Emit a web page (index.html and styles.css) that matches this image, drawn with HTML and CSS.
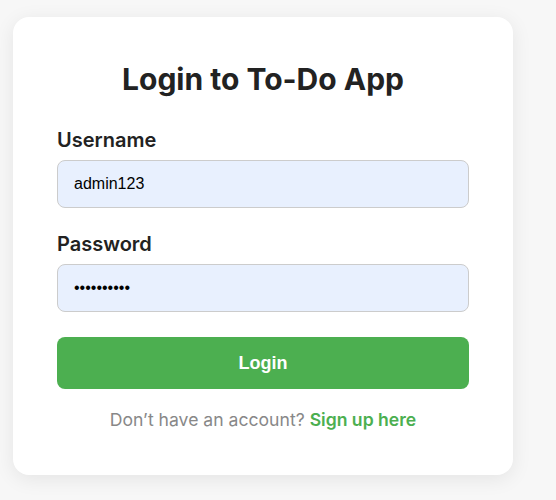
FILE: index.html
```html
<!DOCTYPE html>
<html lang="en">
<head>
<meta charset="utf-8">
<title>Login</title>
<link rel="stylesheet" href="styles.css">
</head>
<body>
<main class="card">
  <h2 class="title">Login to To-Do App</h2>
  <form class="form">
    <div class="field">
      <label class="label" for="u">Username</label>
      <input class="input" id="u" type="text" value="admin123">
    </div>
    <div class="field">
      <label class="label" for="p">Password</label>
      <input class="input" id="p" type="password" value="password12">
    </div>
    <button class="btn" type="button">Login</button>
  </form>
  <p class="footer">Don’t have an account? <a class="link" href="#">Sign up here</a></p>
</main>
</body>
</html>
```

FILE: styles.css
```css
html, body {
  margin: 0;
  padding: 0;
  background: #f7f7f7;
  font-family: Inter, "Noto Sans", sans-serif;
}
body {
  padding: 17px 0 0 13px;
  height: 500px;
  box-sizing: border-box;
}
.card {
  width: 500px;
  box-sizing: border-box;
  background: #fff;
  border-radius: 16px;
  box-shadow: 0 4px 20px rgba(0, 0, 0, 0.08);
  padding: 44px 44px 44px;
}
.title {
  margin: 0 0 31px;
  text-align: center;
  font-size: 30px;
  font-weight: 700;
  line-height: 36px;
  color: #222;
}
.form {
  display: flex;
  flex-direction: column;
}
.field {
  display: flex;
  flex-direction: column;
  gap: 8px;
  margin-bottom: 24px;
}
.label {
  font-size: 20px;
  font-weight: 600;
  line-height: 24px;
  color: #222;
}
.input {
  height: 48px;
  box-sizing: border-box;
  border: 1px solid #ccc;
  border-radius: 8px;
  background: #e8f0fe;
  padding: 0 16px;
  font-family: "Liberation Sans", Arial, sans-serif;
  font-size: 16px;
  color: #000;
  outline: none;
}
.btn {
  height: 52px;
  margin-top: 1px;
  border: none;
  border-radius: 8px;
  background: #4caf50;
  color: #fff;
  font-family: "Liberation Sans", Arial, sans-serif;
  font-size: 18px;
  font-weight: 700;
  cursor: pointer;
}
.footer {
  margin: 20px 0 0;
  text-align: center;
  font-size: 17.6px;
  line-height: 22px;
  color: #888;
}
.link {
  color: #4caf50;
  font-weight: 600;
  text-decoration: none;
}
```
